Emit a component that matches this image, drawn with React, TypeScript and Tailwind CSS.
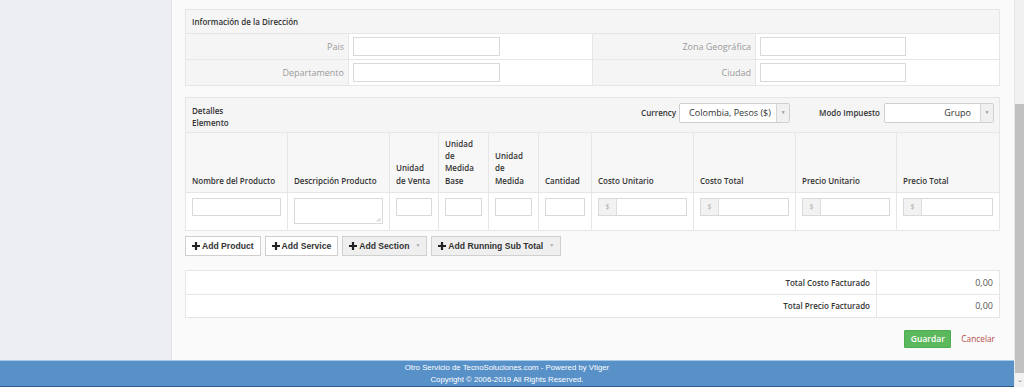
import { ReactNode } from "react";

const OPEN = { fontFamily: '"Open Sans", "Liberation Sans", sans-serif' };
const ARIAL = { fontFamily: '"Liberation Sans", Arial, sans-serif' };

const columns = [
  { label: "Nombre del Producto", w: "w-[102px]", kind: "text" },
  { label: "Descripción Producto", w: "w-[102px]", kind: "area" },
  { label: "Unidad de Venta", w: "w-[49px]", kind: "text" },
  { label: "Unidad de Medida Base", w: "w-[50px]", kind: "text" },
  { label: "Unidad de Medida", w: "w-[50px]", kind: "text" },
  { label: "Cantidad", w: "w-[53px]", kind: "text" },
  { label: "Costo Unitario", w: "w-[102px]", kind: "money" },
  { label: "Costo Total", w: "w-[102px]", kind: "money" },
  { label: "Precio Unitario", w: "w-[101px]", kind: "money" },
  { label: "Precio Total", w: "w-[102px]", kind: "money" },
];

function Plus() {
  return (
    <svg width="8" height="8" viewBox="0 0 8 8" className="mr-[1px]">
      <path d="M4 0v8M0 4h8" stroke="#222" strokeWidth="2.2" />
    </svg>
  );
}

function AddButton({ children, dropdown }: { children: ReactNode; dropdown?: boolean }) {
  return (
    <button
      className={`h-[20px] px-[6px] flex items-center gap-[1px] border border-[#d0d0d0] text-[8.6px] font-bold text-[#333] whitespace-nowrap ${
        dropdown ? "bg-[#efefef]" : "bg-white"
      }`}
      style={ARIAL}
    >
      <Plus />
      {children}
      {dropdown && <span className="ml-[5px] text-[5px] text-[#aaa]">▼</span>}
    </button>
  );
}

function Select({ value, width, right }: { value: string; width: string; right?: boolean }) {
  return (
    <div className={`${width} h-[20px] flex bg-white border border-[#cfcfcf] rounded-[2px]`}>
      <div
        className={`flex-1 flex items-center text-[9px] text-[#333] whitespace-nowrap overflow-hidden ${
          right ? "justify-end pr-[9px]" : "pl-[9px]"
        }`}
      >
        {value}
      </div>
      <div className="w-[13px] border-l border-[#d5d5d5] bg-[#f0f0f0] flex items-center justify-center text-[5px] text-[#999]">
        ▼
      </div>
    </div>
  );
}

function AddressRow({ a, b }: { a: string; b: string }) {
  return (
    <div className="grid grid-cols-[163px_244px_163px_1fr] h-[26px] border-t border-[#e6e6e6] text-[9px]">
      <div className="bg-[#f5f5f5] flex items-center justify-end pr-[4px] text-[#9a9a9a] border-r border-[#e6e6e6]">
        {a}
      </div>
      <div className="bg-white flex items-center pl-[4px] border-r border-[#e6e6e6]">
        <div className="w-[147px] h-[19px] border border-[#d9d9d9] bg-white" />
      </div>
      <div className="bg-[#f5f5f5] flex items-center justify-end pr-[4px] text-[#9a9a9a] border-r border-[#e6e6e6]">
        {b}
      </div>
      <div className="bg-white flex items-center pl-[4px]">
        <div className="w-[146px] h-[19px] border border-[#d9d9d9] bg-white" />
      </div>
    </div>
  );
}

function Cell({ kind }: { kind: string }) {
  if (kind === "area") {
    return (
      <div className="h-[26px] border border-[#d9d9d9] bg-white relative">
        <svg width="5" height="5" viewBox="0 0 5 5" className="absolute right-[1px] bottom-[1px]">
          <path d="M4.5 1L1 4.5M4.5 3L3 4.5" stroke="#aaa" strokeWidth="0.8" />
        </svg>
      </div>
    );
  }
  if (kind === "money") {
    return (
      <div className="h-[18px] flex border border-[#d9d9d9] bg-white">
        <div className="w-[18px] bg-[#f2f2f2] border-r border-[#ddd] flex items-center justify-center text-[7px] text-[#aaa]">
          $
        </div>
        <div className="flex-1" />
      </div>
    );
  }
  return <div className="h-[18px] border border-[#d9d9d9] bg-white" />;
}

export default function App() {
  return (
    <div className="w-[1024px] h-[387px] flex overflow-hidden text-[8px]" style={OPEN}>
      <div className="flex-1 flex flex-col">
        <div className="flex-1 flex min-h-0">
          {/* Sidebar */}
          <div className="w-[172px] bg-[#eceef1] border-r border-[#e2e4e7]" />

          {/* Main */}
          <div className="flex-1 bg-[#fafafa] pt-[9px] pl-[13px] pr-[14px] flex flex-col">
            {/* Address */}
            <div className="border border-[#e6e6e6]">
              <div className="h-[23px] bg-[#f5f5f5] flex items-center pl-[6px] text-[#333] font-semibold">
                Información de la Dirección
              </div>
              <AddressRow a="Pais" b="Zona Geográfica" />
              <AddressRow a="Departamento" b="Ciudad" />
            </div>

            {/* Line items */}
            <div className="mt-[11px] border border-[#e6e6e6]">
              <div className="h-[34px] bg-[#f5f5f5] flex items-start justify-between pl-[6px] pr-[5px] pt-[5px]">
                <div className="font-semibold text-[#333] leading-[12px] mt-[2px]">
                  Detalles
                  <br />
                  Elemento
                </div>
                <div className="flex items-center">
                  <span className="font-semibold text-[#333] mr-[3px]">Currency</span>
                  <Select value="Colombia, Pesos ($)" width="w-[111px]" />
                  <span className="font-semibold text-[#333] ml-[29px] mr-[4px]">Modo Impuesto</span>
                  <Select value="Grupo" width="w-[110px]" right />
                </div>
              </div>
              <div className="flex h-[60px] border-t border-[#e6e6e6] bg-[#f7f7f7]">
                {columns.map((c, i) => (
                  <div
                    key={c.label}
                    className={`${c.w} flex items-end pb-[5px] pl-[6px] pr-[4px] leading-[12.3px] font-semibold text-[#333] ${
                      i < columns.length - 1 ? "border-r border-[#e6e6e6]" : ""
                    }`}
                  >
                    {c.label}
                  </div>
                ))}
              </div>
              <div className="flex h-[38px] border-t border-[#e6e6e6] bg-white">
                {columns.map((c, i) => (
                  <div
                    key={c.label}
                    className={`${c.w} pt-[5px] px-[6px] ${i < columns.length - 1 ? "border-r border-[#e6e6e6]" : ""}`}
                  >
                    <Cell kind={c.kind} />
                  </div>
                ))}
              </div>
            </div>

            {/* Buttons */}
            <div className="mt-[5px] flex gap-[4px]">
              <AddButton>Add Product</AddButton>
              <AddButton>Add Service</AddButton>
              <AddButton dropdown>Add Section</AddButton>
              <AddButton dropdown>Add Running Sub Total</AddButton>
            </div>

            {/* Totals */}
            <div className="mt-[14px] border border-[#e6e6e6] bg-white">
              <div className="grid grid-cols-[691px_1fr] h-[23px]">
                <div className="flex items-center justify-end pr-[6px] font-semibold text-[#333] border-r border-[#e6e6e6]">
                  Total Costo Facturado
                </div>
                <div className="flex items-center justify-end pr-[6px] text-[#555] text-[9px]">0,00</div>
              </div>
              <div className="grid grid-cols-[691px_1fr] h-[23px] border-t border-[#e6e6e6]">
                <div className="flex items-center justify-end pr-[6px] font-semibold text-[#333] border-r border-[#e6e6e6]">
                  Total Precio Facturado
                </div>
                <div className="flex items-center justify-end pr-[6px] text-[#555] text-[9px]">0,00</div>
              </div>
            </div>

            {/* Actions */}
            <div className="mt-[12px] flex justify-end items-center pr-[5px]">
              <button className="h-[18px] w-[47px] bg-[#5cb85c] border border-[#4cae4c] text-white text-[8.5px] font-semibold rounded-[1px]">
                Guardar
              </button>
              <span className="ml-[10px] text-[#b94a48] text-[8.3px]">Cancelar</span>
            </div>
          </div>
        </div>

        {/* Footer */}
        <div
          className="h-[27px] bg-[#5890c8] border-t border-[#a9cbea] border-b border-b-[#2e5f8f] flex flex-col items-center justify-center text-white text-[7.8px] leading-[12px]"
          style={ARIAL}
        >
          <div>Otro Servicio de TecnoSoluciones.com - Powered by Vtiger</div>
          <div>Copyright © 2006-2019 All Rights Reserved.</div>
        </div>
      </div>

      {/* Scrollbar */}
      <div className="w-[11px] bg-[#f1f1f1] flex flex-col border-l border-[#e8e8e8]">
        <div className="h-[104px]" />
        <div className="h-[269px] bg-[#c1c1c1]" />
        <div className="flex-1 flex items-center justify-center text-[7px] text-[#777]">⌄</div>
      </div>
    </div>
  );
}
